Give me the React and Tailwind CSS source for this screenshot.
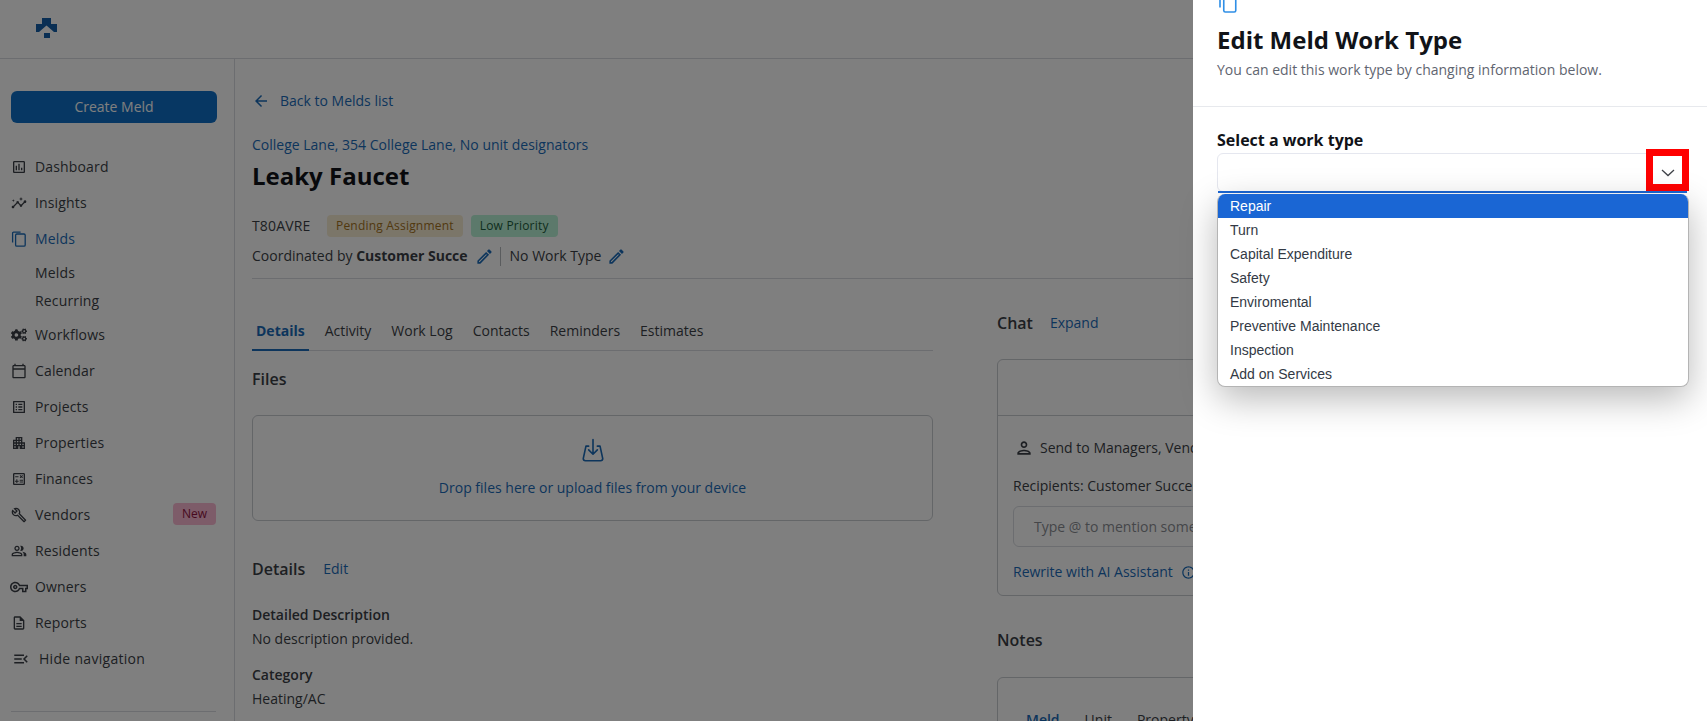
import React from "react";
import { MdOutlineAssessment, MdInsights, MdOutlineCalendarToday, MdOutlineListAlt, MdApartment, MdOutlineCalculate, MdOutlineBuild, MdOutlinePeopleAlt, MdOutlineVpnKey, MdOutlineDescription, MdOutlineMenuOpen, MdOutlineEdit, MdOutlinePerson, MdInfoOutline, MdArrowBack } from "react-icons/md";
import { FaCogs } from "react-icons/fa";

const Copy = ({ className }) => (
  <svg viewBox="0 0 16 16" fill="none" stroke="currentColor" strokeWidth="1.3" className={className}>
    <rect x="4.6" y="3" width="9.6" height="12.2" rx="1.2" />
    <path d="M1.6 11.5V2.2c0-.6.4-1 1-1h7" />
  </svg>
);

const Logo = () => (
  <svg viewBox="0 0 21 20" className="h-5 w-[21px] text-[#145fa8]" fill="currentColor">
    <path d="M6 0h9v6h6v8h-3L10.500 7.500 3 14H0V6h6z" />
    <rect x="8" y="15" width="6" height="5" />
  </svg>
);

const Row = ({ icon: Icon, label, active, badge, iconClass = "h-4 w-4" }) => (
  <div className={`flex h-9 items-center text-sm tracking-[0.15px] pl-[11px] pr-[18px] ${active ? "text-[#1a6bb8] font-medium" : "text-[#3b3f46]"}`}>
    <span className="flex w-[24px] shrink-0 items-center"><Icon className={iconClass} /></span>
    <span>{label}</span>
    {badge && <span className="ml-auto -mt-[2px] flex h-[22px] items-center rounded bg-[#fbb9d3] px-[9px] text-xs tracking-normal text-[#8f1440]">{badge}</span>}
  </div>
);

const Tab = ({ label, active }) => (
  <div className={`h-[31px] pt-[1px] text-sm ${active ? "mr-px pl-[4px] pr-[4px] font-bold text-[#1a6bb8] border-b-2 border-[#1a6bb8]" : "px-[5px] text-[#3b3f46]"}`}>{label}</div>
);

const options = ["Repair", "Turn", "Capital Expenditure", "Safety", "Enviromental", "Preventive Maintenance", "Inspection", "Add on Services"];

export default function App() {
  return (
    <div className="relative h-[721px] w-[1707px] overflow-hidden bg-white font-['Open_Sans',sans-serif] text-sm text-[#3b3f46]">
      <header className="flex h-[59px] items-center border-b border-[#d8dbe0] pl-[36px] pb-[2px]">
        <Logo />
      </header>
      <div className="flex h-[662px]">
        <aside className="w-[235px] shrink-0 border-r border-[#d8dbe0]">
          <div className="mx-[11px] mt-[32px] flex h-8 w-[206px] items-center justify-center rounded-md bg-[#0f6fc6] text-sm text-white">Create Meld</div>
          <nav className="mt-[26px]">
            <Row icon={MdOutlineAssessment} label="Dashboard" />
            <Row icon={MdInsights} label="Insights" />
            <Row icon={Copy} label="Melds" active />
            <div className="pt-[2px] pb-[2px] pl-[35px] text-sm tracking-[0.15px]">
              <div className="flex h-7 items-center">Melds</div>
              <div className="flex h-7 items-center">Recurring</div>
            </div>
            <Row icon={FaCogs} label="Workflows" />
            <Row icon={MdOutlineCalendarToday} label="Calendar" />
            <Row icon={MdOutlineListAlt} label="Projects" />
            <Row icon={MdApartment} label="Properties" />
            <Row icon={MdOutlineCalculate} label="Finances" />
            <Row icon={MdOutlineBuild} label="Vendors" badge="New" />
            <Row icon={MdOutlinePeopleAlt} label="Residents" />
            <Row icon={MdOutlineVpnKey} label="Owners" iconClass="h-[18px] w-[18px] -ml-px" />
            <Row icon={MdOutlineDescription} label="Reports" />
            <div className="flex h-9 items-center pl-[12px] tracking-[0.3px]">
              <MdOutlineMenuOpen className="mr-[9px] h-[18px] w-[18px]" />
              <span>Hide navigation</span>
            </div>
          </nav>
          <div className="mx-[11px] mt-[34px] h-px w-[205px] bg-[#d8dbe0]" />
        </aside>

        <main className="min-w-0 flex-1 overflow-hidden pl-[17px]">
          <div className="mt-[32px] -mb-px flex h-5 items-center text-[#1a6bb8]">
            <MdArrowBack className="h-[18px] w-[18px]" />
            <span className="ml-[10px]">Back to Melds list</span>
          </div>
          <div className="mt-[25px] h-5 leading-5 text-[#1a6bb8]">College Lane, 354 College Lane, No unit designators</div>
          <h1 className="mt-[5px] h-8 text-2xl font-bold leading-8 text-[#111318]">Leaky Faucet</h1>
          <div className="mt-[23px] flex h-[22px] items-center">
            <span className="w-[75px] tracking-[0.15px]">T80AVRE</span>
            <span className="flex h-[22px] items-center rounded bg-[#f7ecd2] px-[9px] text-xs font-medium tracking-[0.2px] text-[#a3721e]">Pending Assignment</span>
            <span className="ml-2 flex h-[22px] items-center rounded bg-[#b9f3d6] px-[9px] text-xs font-medium tracking-[0.2px] text-[#1d5c3c]">Low Priority</span>
          </div>
          <div className="mt-[7px] flex h-6 items-center">
            <span>Coordinated by <b className="font-bold">Customer Succe</b></span>
            <MdOutlineEdit className="ml-[7px] h-[19px] w-[19px] text-[#1a6bb8]" />
            <span className="ml-[6px] mr-[9px] h-[19px] w-px bg-[#b5b8bd]" />
            <span>No Work Type</span>
            <MdOutlineEdit className="ml-[6px] h-[19px] w-[19px] text-[#1a6bb8]" />
          </div>
          <div className="mt-[10px] h-px w-[1000px] bg-[#d8dbe0]" />

          <div className="flex w-[1400px] gap-[64px]">
            <section className="w-[681px] shrink-0">
              <div className="mt-[41px] flex h-[31px] gap-[10px] border-b border-[#d8dbe0]">
                <Tab label="Details" active />
                <Tab label="Activity" />
                <Tab label="Work Log" />
                <Tab label="Contacts" />
                <Tab label="Reminders" />
                <Tab label="Estimates" />
              </div>
              <h2 className="mt-4 h-6 text-base font-semibold leading-6">Files</h2>
              <div className="mt-6 flex h-[106px] flex-col items-center rounded-md border border-[#c9ccd1] pt-[22px] text-[#1a6bb8]">
                <svg viewBox="0 0 24 24" fill="none" stroke="currentColor" strokeWidth="1.500" strokeLinecap="round" strokeLinejoin="round" className="h-[26px] w-[26px]">
                  <path d="M8 7.500H5.500L3 19c0 1 .6 2 2 2h14c1.400 0 2-1 2-2L18.500 7.500H16" />
                  <path d="M12 1.500v13M8 11l4 4 4-4" />
                </svg>
                <div className="mt-[14px] leading-5">Drop files here or upload files from your device</div>
              </div>
              <div className="mt-[36px] flex h-6 items-center">
                <h2 className="text-base font-semibold">Details</h2>
                <span className="ml-[18px] text-[#1a6bb8]">Edit</span>
              </div>
              <div className="mt-6 h-5 font-semibold leading-5">Detailed Description</div>
              <div className="mt-1 h-5 leading-5">No description provided.</div>
              <div className="mt-4 h-5 font-semibold leading-5">Category</div>
              <div className="mt-1 h-5 leading-5">Heating/AC</div>
            </section>

            <section className="w-[600px] shrink-0">
              <div className="mt-8 flex h-6 items-center">
                <h2 className="text-base font-semibold">Chat</h2>
                <span className="ml-[17px] text-[#1a6bb8]">Expand</span>
              </div>
              <div className="mt-6 h-[237px] rounded-md border border-[#c9ccd1]">
                <div className="h-[56px] border-b border-[#c9ccd1]" />
                <div className="mt-[22px] flex h-5 items-center pl-[16px]">
                  <MdOutlinePerson className="h-5 w-5" />
                  <span className="ml-[6px]">Send to Managers, Vendors</span>
                </div>
                <div className="ml-[15px] mt-[18px] h-5 leading-5">Recipients: Customer Success</div>
                <div className="ml-[15px] mt-[10px] flex h-[41px] w-[400px] items-center rounded-md border border-[#d8dbe0] pl-[20px] text-[#8a8d93]">Type @ to mention someone</div>
                <div className="ml-[15px] mt-[15px] flex h-5 items-center text-[#1a6bb8]">
                  <span>Rewrite with AI Assistant</span>
                  <MdInfoOutline className="ml-[8px] h-[15px] w-[15px]" />
                </div>
              </div>
              <h2 className="mt-[32px] h-6 text-base font-semibold leading-6">Notes</h2>
              <div className="mt-[25px] h-[120px] rounded-md border border-[#c9ccd1]">
                <div className="mt-[32px] flex h-5 items-center gap-[25px] pl-[28px]">
                  <span className="font-semibold text-[#1a6bb8]">Meld</span>
                  <span>Unit</span>
                  <span>Property</span>
                </div>
              </div>
            </section>
          </div>
        </main>
      </div>

      <div className="absolute inset-0 bg-black/50" />

      <div className="absolute inset-y-0 right-0 w-[514px] bg-white text-[#111318]">
        <Copy className="ml-[25px] mt-[-7px] h-5 w-5 text-[#2f8fe6]" />
        <h2 className="mt-[11px] ml-[24px] h-8 text-2xl font-bold leading-8">Edit Meld Work Type</h2>
        <p className="mt-1 ml-[24px] h-5 leading-5 text-[#5f6570]">You can edit this work type by changing information below.</p>
        <div className="mt-[26px] h-px bg-[#e7e9ed]" />
        <div className="mt-[21px] ml-[24px] mr-[18px]">
          <label className="block h-[25px] text-base font-bold leading-6">Select a work type</label>
          <div className="relative h-[39px] rounded-md border border-[#e5e7ef] bg-white">
            <div className="absolute right-[-1px] top-[-5px] flex h-[42px] w-[43px] items-center justify-center border-[7px] border-[#ff0000] pt-[5px]">
              <svg viewBox="0 0 14 8" fill="none" stroke="#3f4248" strokeWidth="1.300" className="h-2 w-[14px]"><path d="M1 1l6 5.500L13 1" /></svg>
            </div>
            <div className="absolute left-0 right-[1px] top-[37px] h-[2px] bg-[#1a66d4]" />
            <div className="absolute left-[-1px] right-[-1px] top-[40px] h-[193px] overflow-hidden rounded-lg border-b border-r border-l border-[#b4b4b4] bg-white font-['Liberation_Sans',Arial,sans-serif] text-sm text-[#333a45] shadow-[0_12px_36px_rgba(0,0,0,0.28)]">
              {options.map((o, i) => (
                <div key={o} className={`flex h-6 items-center pl-[12px] ${i === 0 ? "bg-[#1a66d4] text-white" : ""}`}>{o}</div>
              ))}
            </div>
          </div>
        </div>
      </div>
    </div>
  );
}
